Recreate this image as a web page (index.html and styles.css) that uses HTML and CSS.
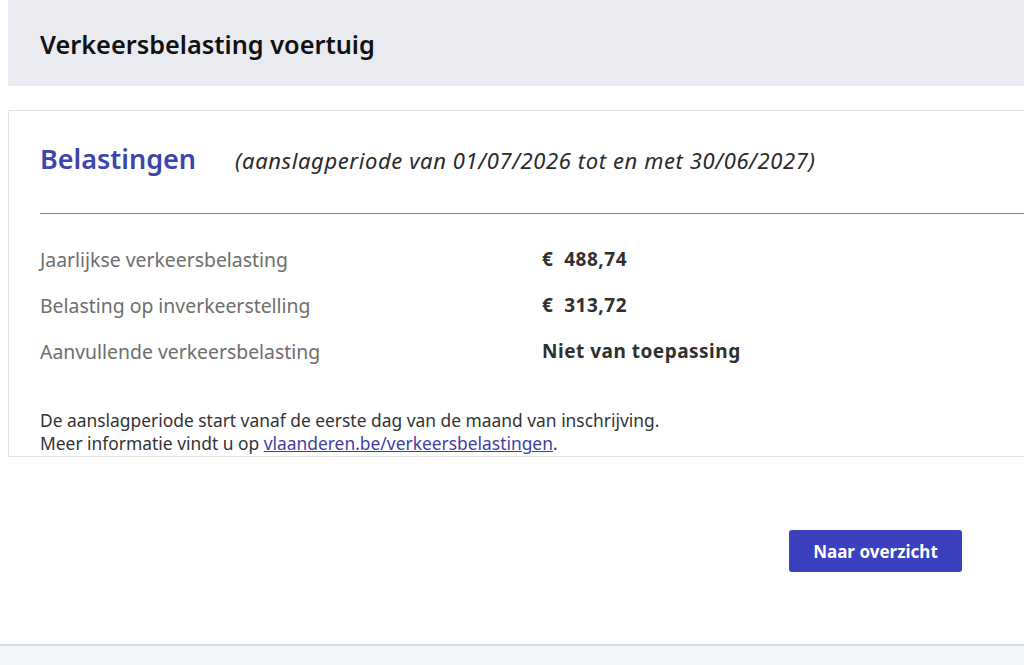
FILE: index.html
```html
<!DOCTYPE html>
<html lang="nl">
<head>
<meta charset="utf-8">
<title>Verkeersbelasting voertuig</title>
<link rel="stylesheet" href="styles.css">
</head>
<body>
<div class="page">
  <header class="topbar">
    <h1 class="title">Verkeersbelasting voertuig</h1>
  </header>
  <section class="card">
    <div class="card-head">
      <h2 class="card-title">Belastingen</h2>
      <span class="period">(aanslagperiode van 01/07/2026 tot en met 30/06/2027)</span>
    </div>
    <hr class="divider">
    <dl class="rows">
      <div class="row"><dt>Jaarlijkse verkeersbelasting</dt><dd>€&nbsp; 488,74</dd></div>
      <div class="row"><dt>Belasting op inverkeerstelling</dt><dd>€&nbsp; 313,72</dd></div>
      <div class="row"><dt>Aanvullende verkeersbelasting</dt><dd>Niet van toepassing</dd></div>
    </dl>
    <p class="note">De aanslagperiode start vanaf de eerste dag van de maand van inschrijving.<br>Meer informatie vindt u op <a href="#">vlaanderen.be/verkeersbelastingen</a>.</p>
  </section>
  <div class="actions">
    <button class="btn">Naar overzicht</button>
  </div>
</div>
<footer class="footer"></footer>
</body>
</html>
```

FILE: styles.css
```css
html, body {
  margin: 0;
  padding: 0;
  background: #fff;
  overflow: hidden;
}
body {
  font-family: "Noto Sans", "Open Sans", sans-serif;
  color: #333;
  width: 1024px;
  height: 665px;
  display: flex;
  flex-direction: column;
}
.page {
  padding-left: 8px;
  flex: 1;
  display: flex;
  flex-direction: column;
}
.topbar {
  background: #e9ebf1;
  height: 86px;
  display: flex;
  align-items: center;
  padding-left: 32px;
}
.title {
  margin: 0;
  font-size: 25.3px;
  font-weight: 600;
  color: #111;
  position: relative;
  top: 1px;
}
.card {
  margin-top: 24px;
  border: 1px solid #e3e3e3;
  border-right: none;
  padding: 0 0 0 31px;
  height: 347px;
  box-sizing: border-box;
}
.card-head {
  display: flex;
  align-items: baseline;
  gap: 39px;
  padding-top: 29px;
  height: 72px;
  box-sizing: border-box;
}
.card-title {
  margin: 0;
  font-size: 27px;
  font-weight: 600;
  color: #3c44ad;
}
.period {
  font-size: 22px;
  font-style: italic;
  letter-spacing: 0.6px;
  color: #2a2a2a;
}
.divider {
  margin: 30px 0 0 0;
  border: none;
  border-top: 1px solid #8a8a8a;
}
.rows {
  margin: 22px 0 0 0;
  display: flex;
  flex-direction: column;
}
.row {
  display: grid;
  grid-template-columns: 502px 1fr;
  height: 46px;
  align-items: center;
}
.row dt {
  font-size: 19.4px;
  color: #6e6e6e;
}
.row dd {
  margin: 0;
  font-size: 19px;
  font-weight: 700;
  letter-spacing: 0.5px;
  color: #2f2f2f;
}
.note {
  margin: 35px 0 0 0;
  font-size: 17.4px;
  line-height: 23px;
  color: #333;
}
.note a {
  color: #3d3ea5;
  text-decoration: underline;
}
.actions {
  display: flex;
  justify-content: flex-end;
  padding-right: 62px;
  padding-top: 73px;
}
.btn {
  background: #3b40bf;
  color: #fff;
  border: none;
  border-radius: 3px;
  width: 173px;
  height: 42px;
  font-family: "Noto Sans", "Open Sans", sans-serif;
  font-size: 17px;
  font-weight: 700;
  cursor: pointer;
}
.footer {
  height: 19px;
  border-top: 2px solid #dcdde1;
  background: #f4f7fa;
}
```
